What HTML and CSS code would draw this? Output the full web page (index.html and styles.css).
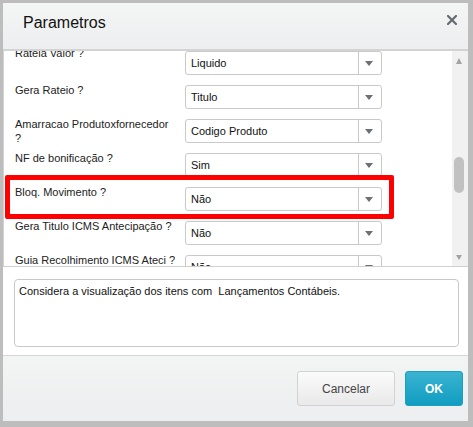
FILE: index.html
```html
<!DOCTYPE html>
<html lang="pt">
<head>
<meta charset="utf-8">
<title>Parametros</title>
<link rel="stylesheet" href="styles.css">
</head>
<body>
<div class="dialog">
  <div class="header">
    <div class="title">Parametros</div>
    <svg class="close" width="10" height="10" viewBox="0 0 10 10"><path d="M1 1L9 9M9 1L1 9" stroke="#666a72" stroke-width="2.2" stroke-linecap="square"/></svg>
  </div>
  <div class="body">
    <div class="content">
      <div class="list">
        <div class="row"><div class="label">Rateia Valor ?</div><div class="select"><span class="val">Liquido</span><span class="arrow"></span></div></div>
        <div class="row"><div class="label">Gera Rateio ?</div><div class="select"><span class="val">Titulo</span><span class="arrow"></span></div></div>
        <div class="row"><div class="label">Amarracao Produtoxfornecedor ?</div><div class="select"><span class="val">Codigo Produto</span><span class="arrow"></span></div></div>
        <div class="row"><div class="label">NF de bonificação ?</div><div class="select"><span class="val">Sim</span><span class="arrow"></span></div></div>
        <div class="row"><div class="label">Bloq. Movimento ?</div><div class="select"><span class="val">Não</span><span class="arrow"></span></div></div>
        <div class="row"><div class="label">Gera Titulo ICMS Antecipação ?</div><div class="select"><span class="val">Não</span><span class="arrow"></span></div></div>
        <div class="row"><div class="label">Guia Recolhimento ICMS Ateci ?</div><div class="select"><span class="val">Não</span><span class="arrow"></span></div></div>
      </div>
    </div>
    <div class="scrollbar">
      <span class="sb-up"></span>
      <span class="sb-thumb"></span>
      <span class="sb-down"></span>
    </div>
  </div>
  <div class="desc-area">
    <div class="desc">Considera a visualização dos itens com&nbsp; Lançamentos Contábeis.</div>
  </div>
  <div class="footer">
    <button class="btn btn-cancel">Cancelar</button>
    <button class="btn btn-ok">OK</button>
  </div>
  <div class="highlight"></div>
</div>
</body>
</html>
```

FILE: styles.css
```css
* { box-sizing: border-box; }
html, body { margin: 0; padding: 0; }
body {
  background: #bdbdbd;
  width: 473px;
  height: 427px;
  overflow: hidden;
  font-family: "Liberation Sans", Arial, sans-serif;
}
.dialog {
  position: relative;
  margin: 3px 0 0 3px;
  width: 465px;
  height: 418px;
  background: #fff;
  display: flex;
  flex-direction: column;
}
.header {
  height: 48px;
  flex: none;
  background: linear-gradient(#f4f5f5, #eceeef);
  border-bottom: 2px solid #d3d3d3;
  display: flex;
  align-items: flex-start;
  justify-content: space-between;
  padding: 10px 11px 0 20px;
}
.title {
  font-size: 16px;
  line-height: 20px;
  color: #111;
}
.close { margin-top: 2px; }
.body {
  height: 216px;
  flex: none;
  display: flex;
  border-left: 1px solid #d2d2d2;
  border-bottom: 1px solid #d0d0d0;
}
.content {
  flex: 1;
  overflow: hidden;
}
.list { margin-top: -2px; }
.row {
  height: 34px;
  display: flex;
  align-items: flex-start;
}
.label {
  width: 181px;
  padding-left: 11px;
  padding-right: 8px;
  font-size: 11px;
  line-height: 14px;
  color: #222;
}
.row:first-child .label { margin-top: -3px; }
.select {
  margin-top: 2px;
  width: 197px;
  height: 24px;
  border: 1px solid #c9c9c9;
  border-radius: 3px;
  display: flex;
  align-items: center;
  background: #fff;
}
.val {
  flex: 1;
  padding-left: 5px;
  font-size: 11px;
  color: #111;
}
.arrow {
  width: 23px;
  height: 22px;
  border-left: 1px solid #c9c9c9;
  position: relative;
}
.arrow::after {
  content: "";
  position: absolute;
  left: 6px;
  top: 9px;
  border-left: 4px solid transparent;
  border-right: 4px solid transparent;
  border-top: 5px solid #6b6f78;
}
.scrollbar {
  width: 16px;
  background: #f1f1f1;
  position: relative;
}
.sb-up, .sb-down, .sb-thumb { position: absolute; }
.sb-up {
  left: 4px; top: 7px;
  border-left: 3.5px solid transparent;
  border-right: 3.5px solid transparent;
  border-bottom: 6px solid #a3a3a3;
}
.sb-down {
  left: 4px; top: 204px;
  border-left: 3.5px solid transparent;
  border-right: 3.5px solid transparent;
  border-top: 5px solid #a3a3a3;
}
.sb-thumb {
  left: 2px; top: 106px;
  width: 10px; height: 36px;
  border-radius: 5px;
  background: #c1c1c1;
}
.desc-area {
  height: 88px;
  flex: none;
  padding: 12px 9px 8px 11px;
}
.desc {
  height: 68px;
  border: 1px solid #c8c8c8;
  border-radius: 4px;
  padding: 4px 4px;
  font-size: 11px;
  line-height: 14px;
  color: #111;
}
.footer {
  flex: 1;
  border-top: 1px solid #d6d6d6;
  background: linear-gradient(#f3f4f4, #eceeef);
  display: flex;
  justify-content: flex-end;
  align-items: flex-start;
  gap: 10px;
  padding: 15px 5px 0 0;
}
.btn {
  height: 35px;
  border-radius: 3px;
  font-family: "Liberation Sans", Arial, sans-serif;
  font-size: 12px;
  padding: 0;
}
.btn-cancel {
  width: 98px;
  border: 1px solid #d2d2d2;
  background: linear-gradient(#fbfbfb, #e9e9e9);
  color: #454545;
}
.btn-ok {
  width: 58px;
  border: 1px solid #1aa0c2;
  background: linear-gradient(#3ab3d0, #109dc1);
  color: #fff;
  font-weight: bold;
}
.highlight {
  position: absolute;
  left: 2px;
  top: 172px;
  width: 389px;
  height: 44px;
  border: 5px solid #f00;
  border-radius: 2px;
}
```
